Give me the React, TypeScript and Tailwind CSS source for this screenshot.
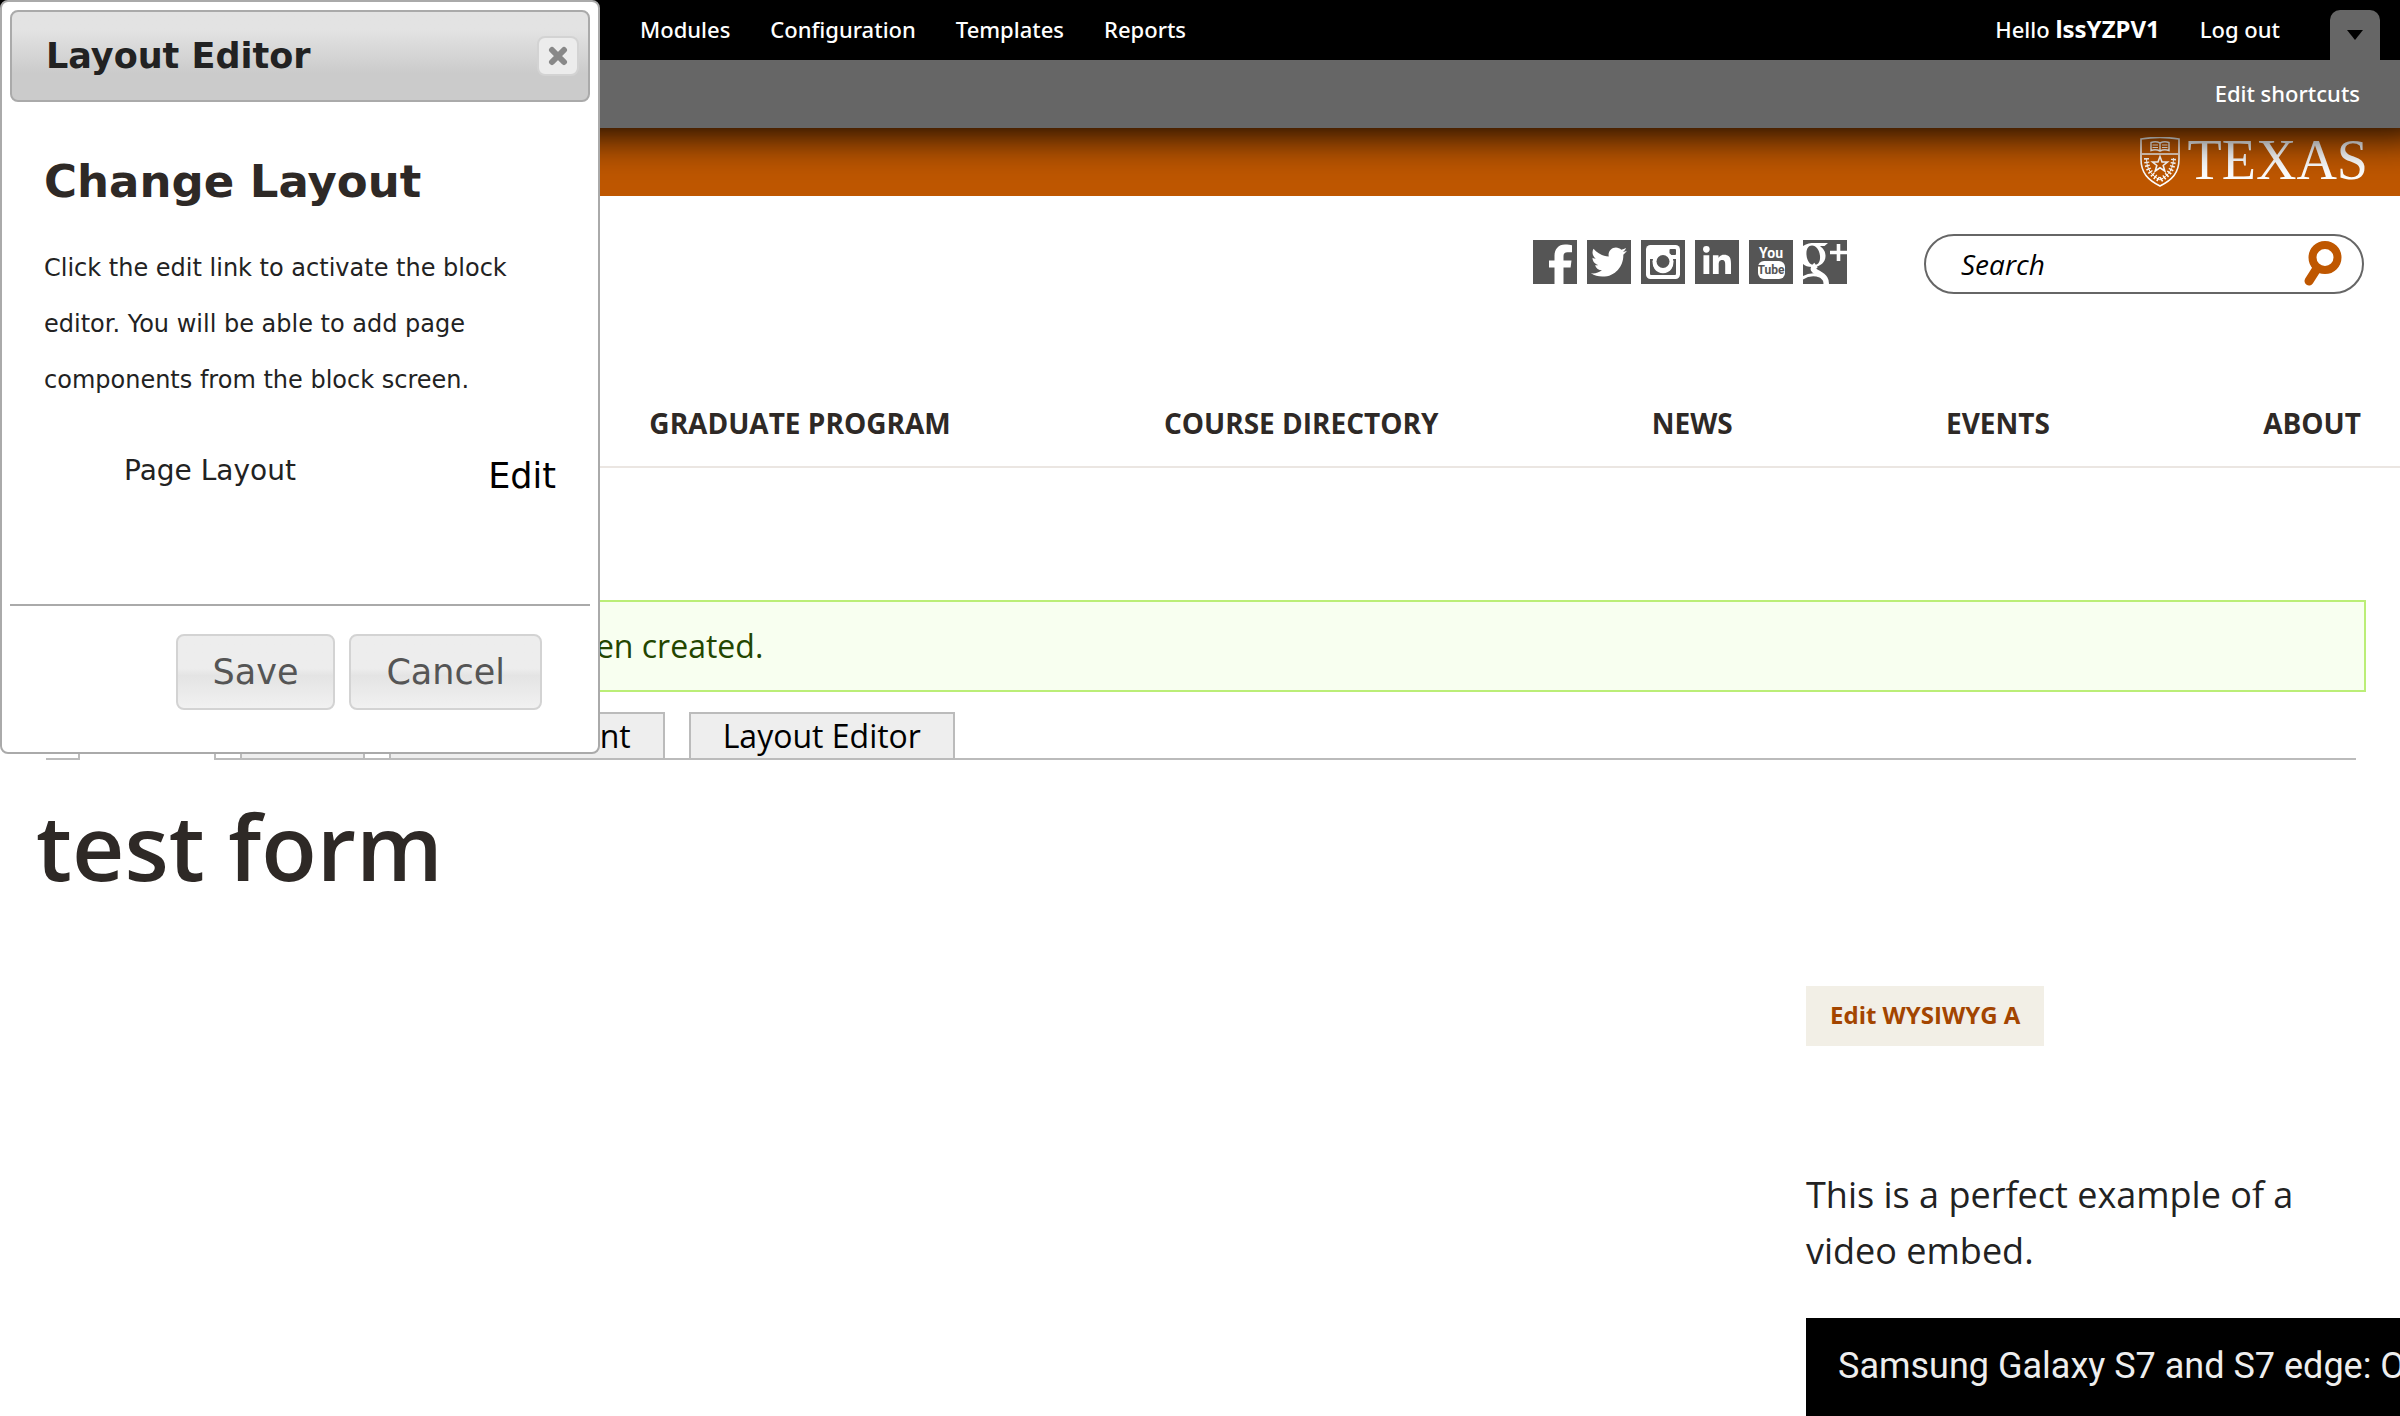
import React from "react";
import { FaTwitter, FaLinkedinIn } from "react-icons/fa";

const adminLinks = ["Modules", "Configuration", "Templates", "Reports"];

function FacebookIcon() {
  return (
    <svg viewBox="0 0 44 44" className="size-11" fill="#fff" aria-hidden="true">
      <path d="M21.500 44V27.500H16V20.500H21.500V16C21.500 9 25.500 4.500 32 4.500C35 4.500 37.500 4.700 39 5.200V12.300H34.500C31.500 12.300 30.500 13.700 30.500 16.500V20.500H38.500L37.600 27.500H30.500V44Z" />
    </svg>
  );
}

function InstagramIcon() {
  return (
    <svg viewBox="0 0 44 44" className="size-11" aria-hidden="true">
      <rect x="5" y="5" width="34" height="34" rx="4.500" fill="#fff" />
      <rect x="28.500" y="9" width="6.500" height="6" rx="1" fill="#555" />
      <path d="M9 19V33.500C9 34.500 9.500 35 10.500 35H33.500C34.500 35 35 34.500 35 33.500V19H31.500A10.300 10.300 0 1 1 12.500 19Z" fill="#555" />
      <circle cx="22" cy="21.500" r="10.500" fill="#fff" />
      <circle cx="22" cy="21.500" r="6.500" fill="#555" />
    </svg>
  );
}

function YoutubeIcon() {
  return (
    <span className="flex size-11 flex-col items-center justify-center font-['Liberation_Sans_Narrow','Roboto',sans-serif] text-[14px] font-bold leading-4">
      <span className="text-white">You</span>
      <span className="w-[27px] rounded-[6px] bg-white text-center text-[12px] leading-[18px] text-[#555]">Tube</span>
    </span>
  );
}

function GooglePlusIcon() {
  return (
    <svg viewBox="0 0 44 44" className="size-11" aria-hidden="true">
      <g fill="none" stroke="#fff">
        <path d="M35.500 4V21M27 12.500H44" strokeWidth="3.600" />
        <path d="M13 25C8 29 11 31 15 33C22 37 24 40 23 46" strokeWidth="5.500" />
        <path d="M-2 39C5 34 11 34 17 36" strokeWidth="3" />
      </g>
      <path
        fill="#fff"
        fillRule="evenodd"
        d="M0 6C4 3.500 7 3 12 3H25L21.500 6H17C21 9 22.500 12 22.500 16C22.500 22 18 27 9 27C5 27 2 26 0 24ZM3.500 15C4 21 7 25 11 25C15 25 17.500 22 17 16C16.500 10 13 5.500 9 5.500C5 5.500 3 9.500 3.500 15Z"
      />
    </svg>
  );
}

function Shield() {
  return (
    <svg viewBox="0 0 40 50" className="h-[50px] w-10" fill="none" stroke="#fff" aria-hidden="true">
      <path d="M1 2C13 0 27 0 39 2V22C39 36 32 43 20 49C8 43 1 36 1 22Z" strokeWidth="1.600" />
      <path d="M2 17H38" strokeWidth="1.600" />
      <path d="M20 6V14M11 5.500C14 4.500 17 4.500 20 6C23 4.500 26 4.500 29 5.500V13.500C26 12.500 23 12.500 20 14C17 12.500 14 12.500 11 13.500Z" strokeWidth="1.400" />
      <path d="M12.500 8H18M12.500 10.500H18M22 8H27.500M22 10.500H27.500" strokeWidth="1" />
      <path d="M20 19.500L22 25H27.500L23.200 28.500L24.800 34L20 30.800L15.200 34L16.800 28.500L12.500 25H18Z" strokeWidth="1.600" />
      <path d="M6.500 21C6.500 32 11 38 20 43C29 38 33.500 32 33.500 21" strokeWidth="1" />
      <path d="M6.500 21C6.500 32 11 38 20 43C29 38 33.500 32 33.500 21" strokeWidth="5" strokeDasharray="1.500 2" />
    </svg>
  );
}

function SearchIcon() {
  return (
    <svg viewBox="0 0 40 48" className="h-12 w-10" fill="none" stroke="#bf5700" aria-hidden="true">
      <circle cx="23" cy="17.500" r="12.500" strokeWidth="8" />
      <path d="M14 30L7 41" strokeWidth="9" strokeLinecap="round" />
    </svg>
  );
}

function AdminToolbar() {
  return (
    <div className="relative z-10 font-['Noto_Sans',sans-serif] text-[22px] font-medium leading-[30px] text-white shadow-[0_-24px_40px_30px_#000]">
      <div className="flex h-[60px] items-center justify-between bg-black pl-[640px] pr-5">
        <nav className="flex gap-10 pb-[2px]">
          {adminLinks.map((l) => (
            <a key={l} href="#">{l}</a>
          ))}
        </nav>
        <div className="flex self-stretch">
          <div className="flex items-center gap-10 pb-[2px]">
            <a href="#">Hello <b className="text-[24px]">lssYZPV1</b></a>
            <a href="#">Log out</a>
          </div>
          <button aria-label="Hide shortcuts" className="ml-[50px] flex h-[50px] w-[50px] items-center justify-center self-end rounded-t-[10px] bg-[#666]">
            <svg viewBox="0 0 16 10" className="h-[10px] w-4" aria-hidden="true"><path d="M0 0H16L8 10Z" fill="#000" /></svg>
          </button>
        </div>
      </div>
      <div className="flex h-[68px] items-center justify-end bg-[#666] pb-[2px] pr-10">
        <a href="#">Edit shortcuts</a>
      </div>
    </div>
  );
}

function SiteHeader() {
  const social = [
    { name: "Facebook", icon: <FacebookIcon /> },
    { name: "Twitter", icon: <FaTwitter className="size-9" /> },
    { name: "Instagram", icon: <InstagramIcon /> },
    { name: "LinkedIn", icon: <FaLinkedinIn className="size-8" /> },
    { name: "YouTube", icon: <YoutubeIcon /> },
    { name: "Google Plus", icon: <GooglePlusIcon /> },
  ];
  return (
    <header>
      <div className="flex h-[68px] items-center justify-end bg-[#bf5700] pr-8">
        <a href="#" className="flex items-center gap-2 font-['Liberation_Serif',serif] text-white">
          <Shield />
          <span className="pb-1 text-[56px] leading-[60px]">TEXAS</span>
        </a>
      </div>
      <div className="flex items-start justify-end gap-[77px] pr-9 pt-[38px]">
        <div className="flex gap-[10px] pt-[6px]">
          {social.map((s) => (
            <a key={s.name} href="#" aria-label={s.name} className="flex size-11 items-center justify-center overflow-hidden bg-[#555] text-white">
              {s.icon}
            </a>
          ))}
        </div>
        <form className="flex h-[60px] w-[440px] items-center rounded-full border-2 border-[#666] pl-[35px] pr-5">
          <input aria-label="Search" placeholder="Search" className="min-w-0 flex-1 text-[28px] italic text-black outline-none placeholder:text-black" />
          <button type="button" aria-label="Submit search"><SearchIcon /></button>
        </form>
      </div>
      <nav className="flex justify-between border-b-2 border-[#ebe6e2] pb-[23px] pl-9 pr-[39px] pt-[109px] text-[28px] font-bold leading-10 text-[#2e2926]">
        <a href="#">UNDERGRADUATE PROGRAM</a>
        <a href="#">GRADUATE PROGRAM</a>
        <a href="#">COURSE DIRECTORY</a>
        <a href="#">NEWS</a>
        <a href="#">EVENTS</a>
        <a href="#">ABOUT</a>
      </nav>
    </header>
  );
}

function Tabs() {
  const tab = "h-[46px] border-2 border-b-0 border-[#bbb] bg-[#eee] px-8 leading-[44px]";
  return (
    <nav className="ml-[46px] mr-11 mt-5 flex items-end gap-6 border-b-2 border-[#bbb] pl-8 text-[32px] text-black">
      <a href="#" className="-mb-[2px] h-12 border-2 border-b-0 border-[#bbb] bg-white px-8 leading-[44px]">View</a>
      <a href="#" className={tab}>Edit</a>
      <a href="#" className={tab}>Block Content</a>
      <a href="#" className={tab}>Layout Editor</a>
    </nav>
  );
}

function LayoutDialog() {
  const button =
    "h-[76px] rounded-lg border-2 border-[#d3d3d3] bg-linear-to-b from-[#ededed] from-45% via-[#e4e4e4] via-55% to-[#f1f1f1] px-[35px] text-[35px] text-[#555]";
  return (
    <section role="dialog" aria-label="Layout Editor" className="absolute left-0 top-0 z-20 w-[600px] rounded-lg border-2 border-[#aaa] bg-white p-2 font-['DejaVu_Sans',sans-serif] text-[#222]">
      <div className="flex h-[92px] items-center justify-between rounded-lg border-2 border-[#aaa] bg-linear-to-b from-[#e3e3e3] from-20% to-[#cbcbcb] to-70% pl-[34px] pr-[9px]">
        <h2 className="text-[35px] font-bold leading-10">Layout Editor</h2>
        <button aria-label="Close" className="flex h-10 w-[42px] items-center justify-center rounded-lg border-2 border-[#d3d3d3] bg-[#ececec]">
          <svg viewBox="0 0 20 20" className="size-5" aria-hidden="true"><path d="M4 4L16 16M16 4L4 16" stroke="#888" strokeWidth="6" strokeLinecap="round" /></svg>
        </button>
      </div>
      <div className="px-[34px] pt-12">
        <h1 className="text-[45px] font-bold leading-[64px] text-[#2e2926]">Change Layout</h1>
        <p className="mt-[26px] text-[24px] leading-[56px]">Click the edit link to activate the block editor. You will be able to add page components from the block screen.</p>
      </div>
      <div className="flex h-[196px] items-start justify-between pl-[114px] pr-[34px] pt-10">
        <span className="text-[28px] leading-[46px]">Page Layout</span>
        <a href="#" className="text-[35px] leading-[56px] text-black">Edit</a>
      </div>
      <div className="flex justify-end gap-[14px] border-t-2 border-[#aaa] pb-[34px] pr-12 pt-7">
        <button className={button}>Save</button>
        <button className={button}>Cancel</button>
      </div>
    </section>
  );
}

export default function App() {
  return (
    <div className="relative h-screen overflow-hidden bg-white font-['Open_Sans',sans-serif] text-[#222]">
      <AdminToolbar />
      <SiteHeader />
      <main>
        <div role="status" className="ml-9 mr-[34px] mt-[132px] border-2 border-[#be7] bg-[#f8fff0] px-[98px] text-[32px] leading-[88px] text-[#234600]">
          Standard Page <em>test form</em> has been created.
        </div>
        <Tabs />
        <h1 className="ml-9 mt-[22px] text-[91px] font-semibold leading-[128px] text-[#2e2926]">test form</h1>
        <aside className="ml-[1806px] mt-[76px]">
          <a href="#" className="block w-fit bg-[#f2efe6] px-6 pb-[2px] text-[24px] font-bold leading-[58px] text-[#a34500]">Edit WYSIWYG A</a>
          <p className="mt-[121px] pr-20 text-[36px] leading-[56px]">This is a perfect example of a video embed.</p>
          <div className="mt-[39px] h-[400px] overflow-hidden whitespace-nowrap bg-black pl-8 pt-6 font-['Roboto',sans-serif] text-[36px] leading-[48px] text-[#eee]">
            Samsung Galaxy S7 and S7 edge: Official Introduction
          </div>
        </aside>
      </main>
      <LayoutDialog />
    </div>
  );
}
